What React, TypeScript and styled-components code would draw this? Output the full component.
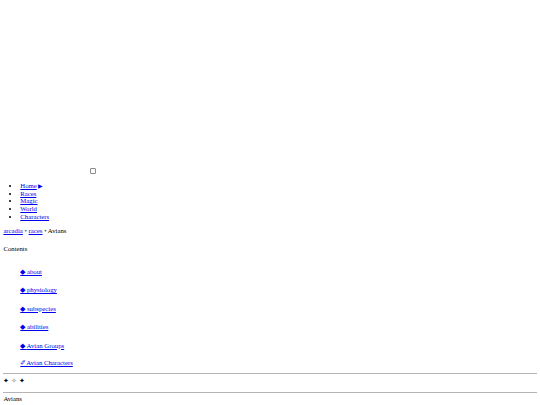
import React from "react";
import styled, { createGlobalStyle } from "styled-components";

const Global = createGlobalStyle`
  html, body { margin: 0; padding: 0; background: #fff; }
  body {
    font-family: "Liberation Serif", "Times New Roman", serif;
    font-size: 6.75px;
    line-height: 7.7px;
    color: #000;
  }
  a { color: #0000ee; }
`;

const Page = styled.div`
  width: 540px;
  padding: 3.375px;
  box-sizing: border-box;
`;

const Banner = styled.div`
  height: 163.4px;
`;

const CheckRow = styled.div`
  height: 8.4px;
  display: flex;
  align-items: center;
  padding-left: 87px;
`;

const Check = styled.input`
  appearance: none;
  margin: 0;
  width: 5.5px;
  height: 5.5px;
  box-sizing: border-box;
  border: 1px solid #8a8a8a;
  border-radius: 1px;
  background: #fff;
`;

const NavList = styled.ul`
  margin: 6.75px 0;
  padding-left: 16.9px;
`;

const NavItem = styled.li`
  height: 7.7px;
`;

const Caret = styled.span`
  display: inline-block;
  margin-left: 1.7px;
  font-size: 5.5px;
`;

const Crumbs = styled.p`
  margin: 6.75px 0;
`;

const Sep = styled.span`
  color: #444;
`;

const ContentsTitle = styled.div`
  margin-top: 10.2px;
`;

const TocList = styled.div`
  display: flex;
  flex-direction: column;
  gap: 10.75px;
  padding-left: 16.9px;
  margin-top: 15.3px;
  margin-bottom: 6.7px;
`;

const TocItem = styled.div<{ $tight?: boolean }>`
  margin-top: ${(p) => (p.$tight ? "-1.4px" : "0")};
`;

const Rule = styled.hr`
  margin: 0;
  border: none;
  border-top: 1px solid #b4b4b4;
`;

const Stars = styled.div`
  margin: 3px 0 7px;
`;

const Hollow = styled.span`
  color: #777;
`;

const Title = styled.div`
  margin-top: 2.5px;
`;

export default function App() {
  const toc = ["about", "physiology", "subspecies", "abilities", "Avian Groups"];
  const nav = ["Races", "Magic", "World", "Characters"];
  return (
    <>
      <Global />
      <Page>
        <Banner />
        <CheckRow>
          <Check type="checkbox" />
        </CheckRow>
        <NavList>
          <NavItem>
            <a href="#">
              Home<Caret>▶</Caret>
            </a>
          </NavItem>
          {nav.map((n) => (
            <NavItem key={n}>
              <a href="#">{n}</a>
            </NavItem>
          ))}
        </NavList>
        <Crumbs>
          <a href="#">arcadia</a> <Sep>•</Sep> <a href="#">races</a> <Sep>•</Sep> Avians
        </Crumbs>
        <ContentsTitle>Contents</ContentsTitle>
        <TocList>
          {toc.map((t) => (
            <TocItem key={t}>
              <a href="#">◆ {t}</a>
            </TocItem>
          ))}
          <TocItem $tight>
            <a href="#">✐Avian Characters</a>
          </TocItem>
        </TocList>
        <Rule />
        <Stars>
          ✦ <Hollow>✧</Hollow> ✦
        </Stars>
        <Rule />
        <Title>Avians</Title>
      </Page>
    </>
  );
}
